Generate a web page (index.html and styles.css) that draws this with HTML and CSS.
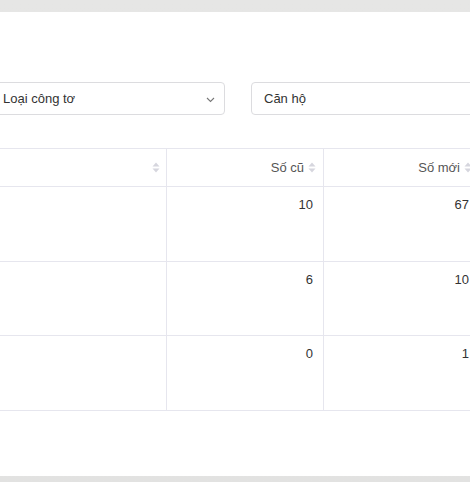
FILE: index.html
```html
<!DOCTYPE html>
<html lang="vi">
<head>
<meta charset="utf-8">
<link rel="stylesheet" href="styles.css">
</head>
<body>
<div class="page">
  <div class="card">
    <div class="filters">
      <div class="select">
        <span class="select-text">Loại công tơ</span>
        <svg class="chevron" width="9" height="6" viewBox="0 0 9 6"><path d="M1 1 L4.5 4.5 L8 1" fill="none" stroke="#777" stroke-width="1.1"/></svg>
      </div>
      <div class="input">Căn hộ</div>
    </div>
    <div class="table">
      <div class="th c1"><svg class="sort" width="8" height="11" viewBox="0 0 8 11"><path d="M4 0.5 L7.5 4.5 H0.5 Z M4 10.5 L7.5 6.5 H0.5 Z" fill="#d6d6de"/></svg></div>
      <div class="th c2"><span>Số cũ</span><svg class="sort" width="8" height="11" viewBox="0 0 8 11"><path d="M4 0.5 L7.5 4.5 H0.5 Z M4 10.5 L7.5 6.5 H0.5 Z" fill="#d6d6de"/></svg></div>
      <div class="th c3"><span>Số mới</span><svg class="sort" width="8" height="11" viewBox="0 0 8 11"><path d="M4 0.5 L7.5 4.5 H0.5 Z M4 10.5 L7.5 6.5 H0.5 Z" fill="#d6d6de"/></svg></div>
      <div class="th c4"></div>

      <div class="td c1"></div><div class="td c2">10</div><div class="td c3">67</div><div class="td c4"></div>
      <div class="td c1"></div><div class="td c2">6</div><div class="td c3">10</div><div class="td c4"></div>
      <div class="td c1"></div><div class="td c2">0</div><div class="td c3">1</div><div class="td c4"></div>
    </div>
  </div>
</div>
</body>
</html>
```
FILE: styles.css
```css
html, body {
  margin: 0;
  padding: 0;
  overflow: hidden;
}
body {
  width: 470px;
  height: 482px;
  font-family: "Liberation Sans", Arial, sans-serif;
  font-size: 13px;
  color: #333;
}
.page {
  height: 482px;
  box-sizing: border-box;
  padding: 12px 0 6px;
  background: linear-gradient(#e6e6e5, #e2e2e1);
  overflow: hidden;
}
.card {
  background: #fff;
  height: 464px;
  overflow: hidden;
  padding-top: 70px;
  box-sizing: border-box;
}
.filters {
  display: flex;
  gap: 26px;
  margin-left: -10px;
}
.select, .input {
  height: 33px;
  box-sizing: border-box;
  border: 1px solid #dcdcdf;
  border-radius: 4px;
  display: flex;
  align-items: center;
  flex-shrink: 0;
}
.select {
  width: 235px;
  padding: 0 9px 0 12px;
  justify-content: space-between;
}
.input {
  width: 260px;
  padding-left: 12px;
}
.chevron {
  display: block;
  margin-top: 2px;
}
.table {
  margin-top: 33px;
  margin-left: -200px;
  display: grid;
  grid-template-columns: 367px 157px 156px 200px;
  border-top: 1px solid #e6e6ee;
}
.th, .td {
  box-sizing: border-box;
  border-bottom: 1px solid #e6e6ee;
  border-right: 1px solid #e6e6ee;
}
.th {
  height: 38px;
  display: flex;
  align-items: center;
  justify-content: flex-end;
  gap: 4px;
  padding-right: 7px;
  color: #555;
}
.th.c1 {
  padding-right: 6px;
}
.sort {
  display: block;
}
.td {
  height: 74.5px;
  text-align: right;
  padding: 10px 10px 0 0;
  line-height: 16px;
  color: #333;
}
```
